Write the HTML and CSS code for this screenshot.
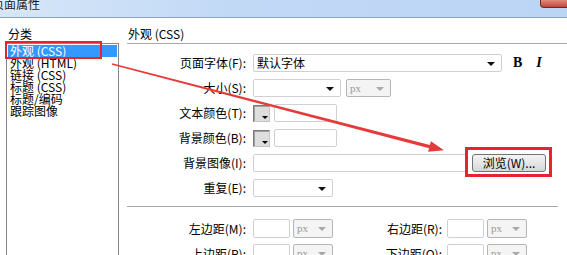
FILE: index.html
```html
<!DOCTYPE html>
<html lang="zh-CN">
<head>
    <meta charset="UTF-8">
    <title>页面属性</title>
    <link rel="stylesheet" href="styles.css">
</head>
<body>
    <div class="titlebar">
        <span class="title">页面属性</span>
        <span class="close"></span>
    </div>
    <div class="dialog">
        <div class="category">
            <div class="cat-label">分类</div>
            <ul class="cat-list">
                <li class="selected">外观 (CSS)</li>
                <li>外观 (HTML)</li>
                <li>链接 (CSS)</li>
                <li>标题 (CSS)</li>
                <li>标题/编码</li>
                <li>跟踪图像</li>
            </ul>
        </div>
        <div class="panel">
            <div class="panel-title">外观 (CSS)</div>
            <div class="sep"></div>
            <div class="form">
                <div class="row">
                    <label class="lbl">页面字体(F):</label>
                    <div class="select font-select">默认字体</div>
                    <span class="bold-btn">B</span>
                    <span class="italic-btn">I</span>
                </div>
                <div class="row">
                    <label class="lbl">大小(S):</label>
                    <div class="select size-select"></div>
                    <div class="select unit">px</div>
                </div>
                <div class="row">
                    <label class="lbl">文本颜色(T):</label>
                    <span class="swatch"></span>
                    <div class="input color-input"></div>
                </div>
                <div class="row">
                    <label class="lbl">背景颜色(B):</label>
                    <span class="swatch"></span>
                    <div class="input color-input"></div>
                </div>
                <div class="row row-image">
                    <label class="lbl">背景图像(I):</label>
                    <div class="input image-input"></div>
                    <button class="browse">浏览(W)...</button>
                </div>
                <div class="row row-repeat">
                    <label class="lbl">重复(E):</label>
                    <div class="select repeat-select"></div>
                </div>
            </div>
            <div class="sep sep-short"></div>
            <div class="form margins">
                <div class="row">
                    <label class="lbl">左边距(M):</label>
                    <div class="input margin-input"></div>
                    <div class="select unit unit-margin">px</div>
                    <label class="lbl lbl-right">右边距(R):</label>
                    <div class="input margin-input"></div>
                    <div class="select unit unit-margin">px</div>
                </div>
                <div class="row">
                    <label class="lbl">上边距(P):</label>
                    <div class="input margin-input"></div>
                    <div class="select unit unit-margin">px</div>
                    <label class="lbl lbl-right">下边距(O):</label>
                    <div class="input margin-input"></div>
                    <div class="select unit unit-margin">px</div>
                </div>
            </div>
        </div>
    </div>

    <!-- annotations drawn over the dialog -->
    <div class="marker marker-cat"></div>
    <div class="marker marker-btn"></div>
    <svg class="arrow" width="567" height="255" viewBox="0 0 567 255">
        <polygon points="112.2,63.3 429.9,144.9 430.9,141.2 444,150.3 428.1,151.8 429.1,148.2 111.8,64.7" fill="#e63b3b"/>
    </svg>
</body>
</html>
```

FILE: styles.css
```css
* {
    box-sizing: border-box;
}
body {
    margin: 0;
    width: 567px;
    height: 255px;
    overflow: hidden;
    position: relative;
    background: #fff;
    color: #000;
    font-family: "Noto Sans CJK SC", "Noto Sans", sans-serif;
    font-size: 12px;
    line-height: 14px;
}
.titlebar {
    height: 18px;
    display: flex;
    align-items: flex-start;
    background: linear-gradient(to right, #d6e6f8, #c2d9f6 40%, #bcd5f5);
    border-bottom: 1px solid #8fa2b9;
}
.title {
    margin-left: -8px;
    margin-top: -3px;
    line-height: 14px;
    color: #1a1a1a;
    text-shadow: 0 0 4px #fff;
}
.close {
    margin-left: auto;
    width: 27px;
    height: 8px;
    background: linear-gradient(#e08a7c, #c4463a);
    border: 1px solid #6f2a22;
    border-top: none;
    border-right: none;
    border-radius: 0 0 0 4px;
}
.dialog {
    display: flex;
    padding-top: 9px;
}
.category {
    width: 113px;
    margin-left: 6px;
}
.cat-label {
    height: 14px;
    margin-left: 2px;
    margin-bottom: 2px;
}
.cat-list {
    list-style: none;
    margin: 0;
    padding: 1px;
    height: 212px;
    border: 1px solid #828790;
    border-bottom: none;
}
.cat-list li {
    height: 12px;
    line-height: 12px;
    padding-left: 2px;
    white-space: nowrap;
}
.cat-list .selected {
    background: #3399ff;
    color: #fff;
}
.panel {
    margin-left: 8px;
    flex: 1;
}
.panel-title {
    height: 14px;
    margin-left: 1px;
    margin-bottom: 2px;
}
.sep {
    height: 2px;
    border-top: 1px solid #a7a7a7;
    border-bottom: 1px solid #fff;
}
.sep-short {
    width: 431px;
    margin-top: 9px;
}
.form {
    margin-top: 9px;
}
.margins {
    margin-top: 11px;
}
.row {
    display: flex;
    align-items: center;
    height: 18px;
    margin-bottom: 7px;
}
.row-image {
    margin-top: 1px;
}
.row-repeat {
    margin-top: 2px;
    margin-bottom: 0;
}
.margins .row {
    height: 19px;
    margin-bottom: 6px;
}
.margins .row:last-child {
    margin-bottom: 0;
}
.lbl {
    width: 119px;
    margin-right: 7px;
    text-align: right;
    white-space: nowrap;
}
.lbl-right {
    width: 109px;
    margin-right: 5px;
}
.input,
.select {
    height: 100%;
    border: 1px solid #cdd0d4;
    border-radius: 2px;
    background: #fff;
}
.select {
    position: relative;
    padding-left: 3px;
    line-height: 16px;
}
.select::after {
    content: "";
    position: absolute;
    right: 6px;
    top: 7px;
    border-left: 4px solid transparent;
    border-right: 4px solid transparent;
    border-top: 4px solid #111;
}
.font-select {
    width: 249px;
}
.size-select {
    width: 88px;
}
.unit {
    width: 45px;
    margin-left: 5px;
    background: #f4f4f4;
    border-color: #b3b6b9;
    color: #9a9a9a;
    font-family: "Liberation Serif", serif;
    font-size: 11px;
}
.unit::after {
    border-top-color: #a8a8a8;
}
.unit-margin {
    width: 40px;
    margin-left: 3px;
}
.bold-btn {
    margin-left: 11px;
    font-family: "Liberation Serif", serif;
    font-weight: bold;
    font-size: 14px;
}
.italic-btn {
    margin-left: 14px;
    font-family: "Liberation Serif", serif;
    font-weight: bold;
    font-style: italic;
    font-size: 14px;
}
.swatch {
    position: relative;
    width: 17px;
    height: 17px;
    background: #dedede;
    border: 1px solid #7a7a7a;
    border-right-color: #c4c4c4;
    border-bottom-color: #c4c4c4;
    box-shadow: inset 1px 1px 0 #a0a0a0;
}
.swatch::after {
    content: "";
    position: absolute;
    right: 1px;
    bottom: 2px;
    border-left: 3px solid transparent;
    border-right: 3px solid transparent;
    border-top: 3px solid #000;
}
.color-input {
    width: 63px;
    margin-left: 4px;
}
.image-input {
    width: 215px;
}
.browse {
    width: 74px;
    height: 18px;
    margin-left: 4px;
    padding: 0;
    font: inherit;
    line-height: 16px;
    color: #000;
    background: linear-gradient(#f4f4f4, #e6e6e6 50%, #d6d6d6);
    border: 1px solid #727272;
    border-radius: 3px;
}
.repeat-select {
    width: 80px;
}
.margin-input {
    width: 37px;
}
.marker {
    position: absolute;
    border: 3px solid #e4262c;
}
.marker-cat {
    left: 5px;
    top: 41px;
    width: 97px;
    height: 18px;
    border-width: 2px;
}
.marker-btn {
    left: 465px;
    top: 147px;
    width: 87px;
    height: 30px;
}
.arrow {
    position: absolute;
    left: 0;
    top: 0;
}
```
